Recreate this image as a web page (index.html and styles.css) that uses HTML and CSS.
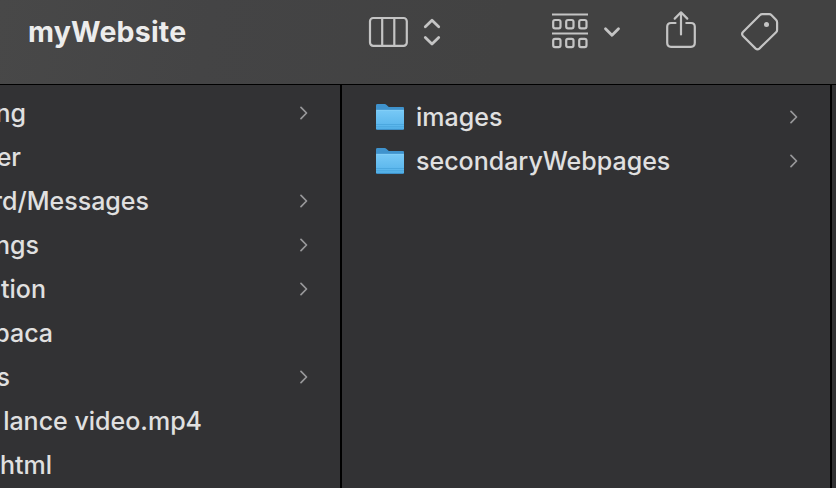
FILE: index.html
```
<!DOCTYPE html>
<html lang="en">
<head>
<meta charset="utf-8">
<title>myWebsite</title>
<link rel="stylesheet" href="styles.css">
</head>
<body>
<svg class="defs" aria-hidden="true">
  <defs>
    <linearGradient id="front" x1="0" y1="0" x2="0" y2="1">
      <stop offset="0" stop-color="#78c9f6"/>
      <stop offset="1" stop-color="#54b2ea"/>
    </linearGradient>
    <symbol id="folder" viewBox="0 0 30 28">
      <path d="M1 2.4Q1 1 2.4 1H9.600Q10.700 1 11.600 1.900L13.200 3.400Q13.700 3.900 14.600 3.900H28Q29 3.900 29 5V12H1Z" fill="#3f93cd"/>
      <path d="M1 7.900Q1 6.900 2 6.900H28Q29 6.900 29 7.900V25.500Q29 26.800 27.700 26.800H2.300Q1 26.800 1 25.500Z" fill="url(#front)"/>
      <path d="M1 7.300H29" stroke="#8bd3f8" stroke-width=".7"/>
      <path d="M1 21.500H29M1 23.700H29" stroke="#45a0d8" stroke-width=".7"/>
      <path d="M1.600 26.400H28.400" stroke="#398fca" stroke-width=".8"/>
    </symbol>
    <symbol id="chevron" viewBox="0 0 8 14">
      <path d="M1 1.400L6.500 7L1 12.600" fill="none" stroke="#98989a" stroke-width="1.700" stroke-linecap="round" stroke-linejoin="round"/>
    </symbol>
  </defs>
</svg>
<div class="window">
  <header class="toolbar">
    <h1 class="title">myWebsite</h1>
    <svg class="icon view" viewBox="0 0 76 34">
      <rect x="2" y="3" width="36.800" height="27.800" rx="3.200"/>
      <path d="M14.200 3V30.800M26.300 3V30.800"/>
      <path class="bold" d="M57.300 11.700L64 5.300L70.700 11.700M57.300 22.500L64 29L70.700 22.500"/>
    </svg>
    <svg class="icon group" viewBox="0 0 70 38">
      <path d="M0 2.500H36M0 21.500H36"/>
      <rect x="1.200" y="8" width="7.300" height="8.300" rx="1.800"/>
      <rect x="14.200" y="8" width="7.300" height="8.300" rx="1.800"/>
      <rect x="27.200" y="8" width="7.300" height="8.300" rx="1.800"/>
      <rect x="1.200" y="26.800" width="7.300" height="8.300" rx="1.800"/>
      <rect x="14.200" y="26.800" width="7.300" height="8.300" rx="1.800"/>
      <rect x="27.200" y="26.800" width="7.300" height="8.300" rx="1.800"/>
      <path class="bold" d="M53.500 16.700L60 23.300L66.500 16.700"/>
    </svg>
    <svg class="icon share" viewBox="0 0 32 40">
      <path d="M10.500 13H6Q2.200 13 2.200 16.800V32.800Q2.200 36.800 6 36.800H26Q29.800 36.800 29.800 32.800V16.800Q29.800 13 26 13H21.300"/>
      <path d="M16 24.500V3M9.700 8.600L16 2.300L22.300 8.600"/>
    </svg>
    <svg class="icon tag" viewBox="0 0 40 42">
      <path d="M22.300 3.200H29.200Q30.600 3.200 31.600 4.200L36.200 9.100Q37.100 10.100 37.100 11.500V19Q37.100 20.300 36.100 21.300L19.300 37.600Q17.500 39.200 15.700 37.600L3 25Q1.200 23 3 21L19.800 4.300Q20.900 3.200 22.300 3.200Z"/>
      <circle class="dot" cx="26.500" cy="13.500" r="2.500"/>
    </svg>
  </header>
  <main class="columns">
    <ul class="column parent">
      <li class="row"><span class="name end-ng">ng</span><svg class="chevron"><use href="#chevron"/></svg></li>
      <li class="row"><span class="name end-er">er</span></li>
      <li class="row"><span class="name end-messages">rd/Messages</span><svg class="chevron"><use href="#chevron"/></svg></li>
      <li class="row"><span class="name end-ngs">ngs</span><svg class="chevron"><use href="#chevron"/></svg></li>
      <li class="row"><span class="name end-tion">tion</span><svg class="chevron"><use href="#chevron"/></svg></li>
      <li class="row"><span class="name end-paca">paca</span></li>
      <li class="row"><span class="name end-s">s</span><svg class="chevron"><use href="#chevron"/></svg></li>
      <li class="row"><span class="name end-video">lance video.mp4</span></li>
      <li class="row"><span class="name end-html">html</span></li>
    </ul>
    <ul class="column current">
      <li class="row"><svg class="folder"><use href="#folder"/></svg><span class="label">images</span><svg class="chevron"><use href="#chevron"/></svg></li>
      <li class="row"><svg class="folder"><use href="#folder"/></svg><span class="label">secondaryWebpages</span><svg class="chevron"><use href="#chevron"/></svg></li>
    </ul>
    <div class="column next"></div>
  </main>
</div>
</body>
</html>
```
FILE: styles.css
```
* { box-sizing: border-box; }
body { margin: 0; background: #323234; font-family: Inter, "Liberation Sans", sans-serif; }
.defs { display: block; width: 0; height: 0; }
.window { width: 836px; height: 488px; display: flex; flex-direction: column; overflow: hidden; color: #e0e0e0; }
.toolbar { height: 85px; flex: none; display: flex; align-items: flex-start; background: linear-gradient(100deg, #484848, #444445 25%, #424242 60%); border-bottom: 1px solid #000; }
.title { margin: 15px 0 0 28px; width: 340px; font-size: 28.5px; line-height: 34px; font-weight: 700; letter-spacing: .2px; color: #ececec; }
.icon { flex: none; fill: none; stroke: #c4c4c4; stroke-width: 2.2; stroke-linecap: round; stroke-linejoin: round; }
.bold { stroke-width: 2.8; }
.dot { fill: #c4c4c4; stroke: none; }
.view { width: 76px; height: 34px; margin-top: 15px; }
.group { width: 70px; height: 38px; margin: 12px 0 0 108px; stroke-linecap: butt; }
.group .bold { stroke-linecap: round; }
.share { width: 32px; height: 40px; margin: 10px 0 0 42.5px; }
.tag { width: 40px; height: 42px; margin: 11px 0 0 43.2px; }
.columns { flex: 1; min-height: 0; display: flex; }
.column { margin: 0; padding: 0; list-style: none; overflow: hidden; flex: none; }
.parent { width: 342px; border-right: 2px solid #000; padding: 6px 32px 0 0; }
.current { width: 490px; border-right: 2px solid #000; padding: 10px 32px 0 33px; }
.next { width: 4px; }
.row { height: 44px; display: flex; align-items: center; font-size: 25px; font-weight: 450; line-height: 44px; white-space: nowrap; letter-spacing: 0; }
.name { display: flex; justify-content: flex-end; overflow: hidden; flex: none; }
.end-ng { width: 26px; }
.end-er { width: 21px; }
.end-messages { width: 149px; }
.end-ngs { width: 39px; }
.end-tion { width: 46px; }
.end-paca { width: 53px; }
.end-s { width: 10px; }
.end-video { width: 202px; }
.end-html { width: 52px; }
.chevron { width: 8px; height: 14px; margin-left: auto; flex: none; }
.folder { width: 30px; height: 28px; margin-right: 11px; flex: none; }
```
